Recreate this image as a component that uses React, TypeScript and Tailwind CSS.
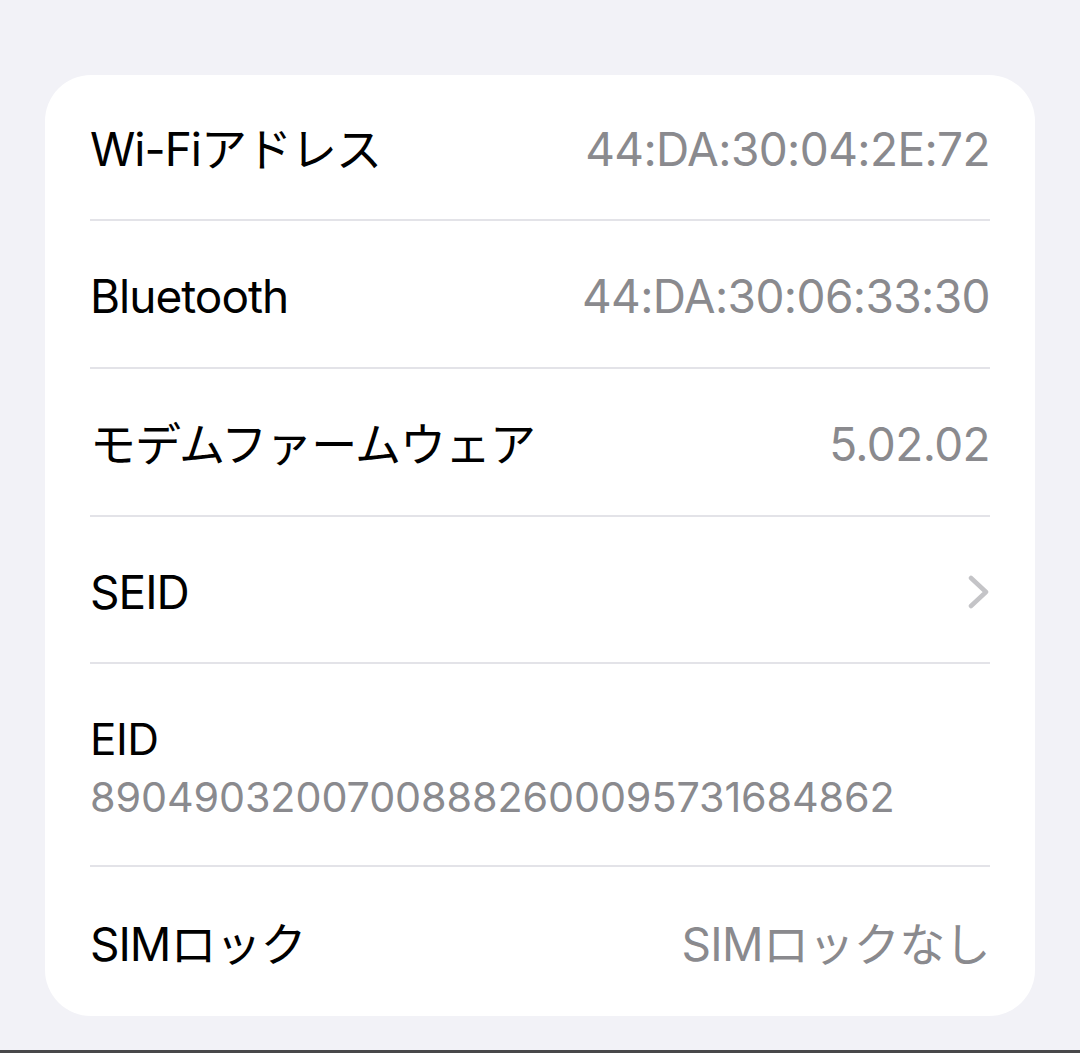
const rows = [
  { label: "Wi-Fiアドレス", value: "44:DA:30:04:2E:72" },
  { label: "Bluetooth", value: "44:DA:30:06:33:30" },
  { label: "モデムファームウェア", value: "5.02.02" },
];

const font = "font-['Inter','Noto_Sans_CJK_JP',sans-serif]";

const Chevron = () => (
  <svg width="22" height="34" viewBox="0 0 22 34" fill="none">
    <path
      d="M3 3 L18 17 L3 31"
      stroke="#c4c4c7"
      strokeWidth="4.5"
      strokeLinecap="round"
      strokeLinejoin="round"
    />
  </svg>
);

const Row = ({ label, children, h }: { label: string; children?: React.ReactNode; h: string }) => (
  <div className={`flex items-center justify-between pt-[5px] ${h}`}>
    <span className="text-[46px] tracking-[-1px] text-black">{label}</span>
    {children}
  </div>
);

const heights = ["h-[146px]", "h-[148px]", "h-[148px]"];

export default function App() {
  return (
    <div className={`flex h-[1053px] w-full flex-col bg-[#f2f2f7] ${font}`}>
      <div className="flex-1 px-[45px] pt-[75px]">
        <div className="rounded-[46px] bg-white px-[45px]">
          <div className="divide-y-2 divide-[#e3e3e8]">
            {rows.map((r, i) => (
              <Row key={r.label} label={r.label} h={heights[i]}>
                <span className="text-[46px] tracking-[-0.6px] text-[#8a8a8e]">{r.value}</span>
              </Row>
            ))}
            <Row label="SEID" h="h-[147px]">
              <Chevron />
            </Row>
            <div className="flex h-[203px] flex-col justify-center pt-[4px]">
              <span className="text-[44px] leading-[60px] tracking-[-0.5px] text-black">EID</span>
              <span className="text-[41.3px] leading-[56px] tracking-[-0.1px] text-[#8a8a8e]">
                89049032007008882600095731684862
              </span>
            </div>
            <Row label="SIMロック" h="h-[149px]">
              <span className="text-[46px] tracking-[-0.6px] text-[#8a8a8e]">SIMロックなし</span>
            </Row>
          </div>
        </div>
      </div>
      <div className="h-[3px] bg-[#48484a]" />
    </div>
  );
}
